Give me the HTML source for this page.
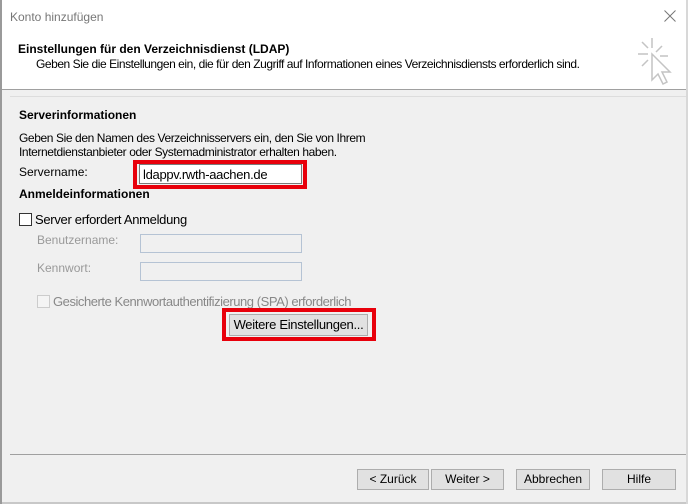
<!DOCTYPE html>
<html><head><meta charset="utf-8"><style>
body{margin:0;width:688px;height:504px;background:#f0f0f0;font-family:"Liberation Sans",sans-serif;font-size:12px;color:#000;position:relative;overflow:hidden}
.a{position:absolute;white-space:nowrap}
.btn{position:absolute;background:#e1e1e1;border:1px solid #adadad;box-sizing:border-box;text-align:center;font-size:12px;line-height:19px;white-space:nowrap}
.inp{position:absolute;box-sizing:border-box;border:1px solid #adadad;background:#f0f0f0}
.red{position:absolute;border:4px solid #e8000b;box-sizing:border-box}
</style></head><body>
<div class="a" style="left:0;top:0;width:2px;height:504px;background:#9a9a9a"></div>
<div class="a" style="left:2px;top:0;width:684px;height:89px;background:#fff"></div>
<div class="a" style="left:686px;top:0;width:2px;height:504px;background:#d8d8d8"></div>
<div class="a" style="left:2px;top:89px;width:684px;height:1px;background:#a0a0a0"></div>
<div class="a" style="left:10px;top:10px;color:#777">Konto hinzufügen</div>
<svg class="a" style="left:664px;top:10px" width="12" height="12" viewBox="0 0 12 12" stroke="#777" stroke-width="1"><path d="M0.5 0.5L11.5 11.5M11.5 0.5L0.5 11.5"/></svg>
<div class="a" style="left:18px;top:42px;font-weight:bold">Einstellungen für den Verzeichnisdienst (LDAP)</div>
<div class="a" style="left:36px;top:57px;letter-spacing:-0.45px">Geben Sie die Einstellungen ein, die für den Zugriff auf Informationen eines Verzeichnisdiensts erforderlich sind.</div>
<svg class="a" style="left:636px;top:36px" width="40" height="52" viewBox="0 0 40 52" fill="none" stroke="#c4c4c4" stroke-width="1.5">
<path d="M16 2v10M6 6l6 6M20 16l6-6M2 18h10M6 30l6-6M24 20h8"/>
<path d="M16 18v26l6-6 5 10 4-2-5-10h8z"/>
</svg>
<div class="a" style="left:10px;top:96px;width:676px;height:1px;background:#ddd"></div>
<div class="a" style="left:19px;top:108px;font-weight:bold">Serverinformationen</div>
<div class="a" style="left:19px;top:131px;line-height:14px;letter-spacing:-0.4px">Geben Sie den Namen des Verzeichnisservers ein, den Sie von Ihrem<br>Internetdienstanbieter oder Systemadministrator erhalten haben.</div>
<div class="a" style="left:19px;top:165px">Servername:</div>
<div class="red" style="left:133px;top:160px;width:174px;height:29px"></div>
<div class="inp" style="left:139px;top:164px;width:163px;height:20px;background:#fff;border-color:#7a7a7a"></div>
<div class="a" style="left:143px;top:167px;font-size:13px;letter-spacing:-0.3px">ldappv.rwth-aachen.de</div>
<div class="a" style="left:19px;top:187px;font-weight:bold">Anmeldeinformationen</div>
<div class="a" style="left:19px;top:213px;width:13px;height:13px;border:1px solid #333;box-sizing:border-box;background:#fff"></div>
<div class="a" style="left:35px;top:212px;font-size:13px;letter-spacing:-0.3px">Server erfordert Anmeldung</div>
<div class="a" style="left:37px;top:233px;color:#999">Benutzername:</div>
<div class="inp" style="left:140px;top:234px;width:162px;height:19px;border-color:#b5c3d4"></div>
<div class="a" style="left:37px;top:261px;color:#999">Kennwort:</div>
<div class="inp" style="left:140px;top:262px;width:162px;height:19px;border-color:#b5c3d4"></div>
<div class="a" style="left:37px;top:295px;width:13px;height:13px;border:1px solid #ccc;box-sizing:border-box;background:#f4f4f4"></div>
<div class="a" style="left:53px;top:294px;color:#888;font-size:13px;letter-spacing:-0.45px">Gesicherte Kennwortauthentifizierung (SPA) erforderlich</div>
<div class="red" style="left:222px;top:308px;width:154px;height:33px"></div>
<div class="btn" style="left:229px;top:314px;width:139px;height:22px;line-height:20px;font-size:13px;letter-spacing:-0.3px">Weitere Einstellungen...</div>
<div class="a" style="left:10px;top:454px;width:676px;height:1px;background:#a0a0a0"></div>
<div class="btn" style="left:357px;top:469px;width:72px;height:21px">&lt; Zurück</div>
<div class="btn" style="left:431px;top:469px;width:73px;height:21px">Weiter &gt;</div>
<div class="btn" style="left:516px;top:469px;width:74px;height:21px">Abbrechen</div>
<div class="btn" style="left:602px;top:469px;width:74px;height:21px">Hilfe</div>
<div class="a" style="left:2px;top:502px;width:684px;height:2px;background:#c8c8c8"></div>
</body></html>
